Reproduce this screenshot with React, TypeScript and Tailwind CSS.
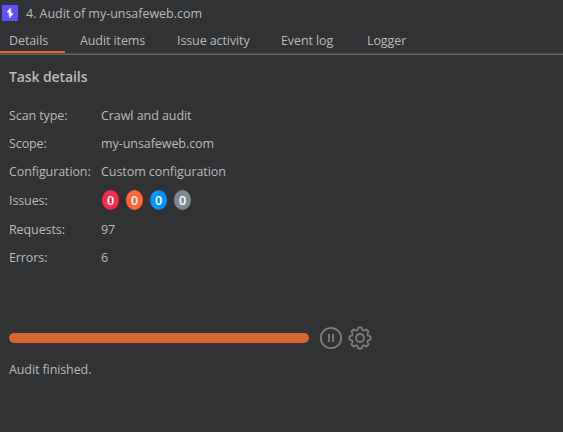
const tabs = [
  { label: 'Details', cls: 'w-[65px] pl-[9px]' },
  { label: 'Audit items', cls: 'w-[97px] pl-[15px]' },
  { label: 'Issue activity', cls: 'w-[104px] pl-[15px]' },
  { label: 'Event log', cls: 'w-[86px] pl-[15px]' },
  { label: 'Logger', cls: 'w-[75px] pl-[15px]' },
];

const badges = ['bg-[#f72b4d]', 'bg-[#ff6633]', 'bg-[#0094ff]', 'bg-[#7e8993]'];

function Row({ label, value, h }: { label: string; value?: string; h: string }) {
  return (
    <div className={`flex items-center ${h}`}>
      <span className="w-[92px] shrink-0">{label}</span>
      {value ? (
        <span className="tracking-[-0.06px]">{value}</span>
      ) : (
        <div className="flex gap-[7px] pb-0.5 pl-px">
          {badges.map((color) => (
            <span
              key={color}
              className={`flex h-5 w-[17px] items-center justify-center rounded-[50%] pt-0.5 text-[12.5px] font-semibold tracking-normal text-white ${color}`}
            >
              0
            </span>
          ))}
        </div>
      )}
    </div>
  );
}

function gearPath() {
  let d = '';
  for (let i = 0; i < 8; i++) {
    const c = i * 45 - 90;
    const p = (r: number, a: number) => {
      const t = ((c + a) * Math.PI) / 180;
      return `${(12 + r * Math.cos(t)).toFixed(2)} ${(12 + r * Math.sin(t)).toFixed(2)}`;
    };
    d += `${i ? 'L' : 'M'}${p(9.4, -13)}Q${p(10.7, -11)} ${p(10.7, -5)}L${p(10.7, 5)}Q${p(10.7, 11)} ${p(9.4, 13)}Q${p(7.1, 22.5)} ${p(9.4, 32)}`;
  }
  return d + 'Z';
}

export default function App() {
  return (
    <div className="flex h-[432px] w-[563px] flex-col overflow-hidden bg-[#313234] font-['Open_Sans','Noto_Sans',sans-serif] text-[12.5px] tracking-[-0.1px] whitespace-nowrap text-[#bbbbbb]">
      <header className="flex h-[27px] items-start pt-[5px] pl-0.5">
        <svg width="16" height="16" viewBox="0 0 16 16" className="shrink-0">
          <path d="M0 0h16v16H0z" fill="#6150ff" />
          <path d="M8.6 2.8v3.6H10L8.6 7.6l2.6 1.2L7.4 13V9.6H6l1.4-1.4L4.8 7z" fill="#fff" stroke="#fff" strokeWidth=".3" />
        </svg>
        <h1 className="pl-2 leading-[18px] tracking-[-0.03px]">4. Audit of my-unsafeweb.com</h1>
      </header>
      <nav className="flex h-[27px] border-b border-[#4c4d4f]">
        {tabs.map((tab, i) => (
          <div
            key={tab.label}
            className={`flex h-[26px] items-center pt-[5px] ${tab.cls} ${i === 0 ? 'border-b-2 border-[#d86633]' : 'border-b-2 border-transparent'}`}
          >
            {tab.label}
          </div>
        ))}
      </nav>
      <main className="flex flex-col border-t border-[#646567] pl-[9px]">
        <h2 className="mt-3 h-5 text-[14px] leading-5 font-semibold">Task details</h2>
        <section className="mt-[15px]">
          <Row label="Scan type:" value="Crawl and audit" h="h-7" />
          <Row label="Scope:" value="my-unsafeweb.com" h="h-7" />
          <Row label="Configuration:" value="Custom configuration" h="h-7" />
          <Row label="Issues:" h="h-[30px]" />
          <Row label="Requests:" value="97" h="h-7" />
          <Row label="Errors:" value="6" h="h-7" />
        </section>
        <div className="mt-[54px] flex h-6 items-center">
          <div className="h-[10px] w-[300px] rounded-full bg-[#d86633]" />
          <svg width="24" height="24" viewBox="0 0 24 24" className="ml-[10px]" fill="none" stroke="#7c7d7f">
            <circle cx="12" cy="12" r="10.2" strokeWidth="1.8" />
            <path d="M10 8v8M14 8v8" strokeWidth="1.8" />
          </svg>
          <svg width="24" height="24" viewBox="0 0 24 24" className="ml-[5px]" fill="none" stroke="#7c7d7f" strokeWidth="1.8" strokeLinejoin="round">
            <path d={gearPath()} />
            <circle cx="12" cy="12" r="4" />
          </svg>
        </div>
        <p className="mt-[10px] leading-5">Audit finished.</p>
      </main>
    </div>
  );
}
